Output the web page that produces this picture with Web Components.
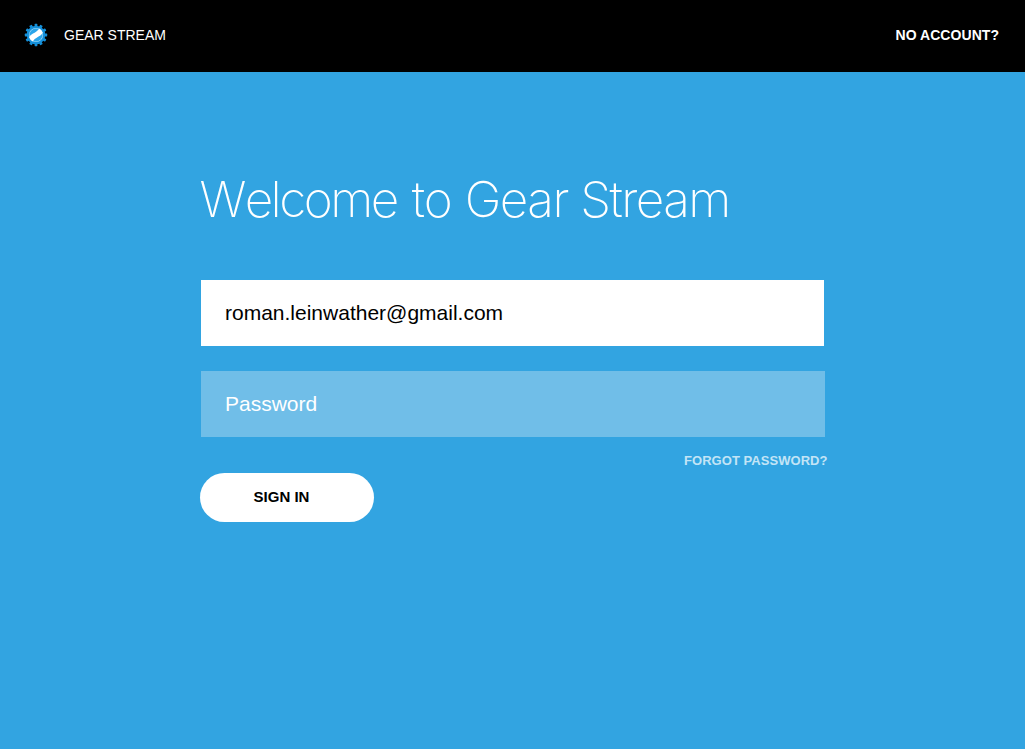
<!DOCTYPE html>
<html lang="en">
<head>
<meta charset="utf-8">
<title>Gear Stream</title>
<style>
body { margin: 0; background: #32a4e1; font-family: "Liberation Sans", Arial, sans-serif; }
</style>
</head>
<body>
<gs-page></gs-page>
<script>
const define = (name, html) => customElements.define(name, class extends HTMLElement {
  constructor() {
    super();
    this.attachShadow({ mode: 'open' }).innerHTML = html;
  }
});

const teeth = Array.from({ length: 12 }, (_, i) =>
  `<rect x="10.6" y="0.8" width="2.8" height="4" rx=".6" transform="rotate(${i * 30} 12 12)"/>`).join('');

define('gs-logo', `
<style>:host { display: block; width: 24px; height: 24px; } svg { display: block; }</style>
<svg width="24" height="24" viewBox="0 0 24 24">
  <g fill="#1590da">${teeth}<circle cx="12" cy="12" r="9.3"/></g>
  <circle cx="12" cy="12" r="7.1" fill="#a9dcf7"/>
  <circle cx="12" cy="12" r="6.5" fill="#2aa5ea"/>
  <path d="M5.2 14.2C6.6 11.6 8.4 11 10.6 9.8C12.8 8.6 14 7.4 15.2 5.6A7.1 7.1 0 0 1 18.8 9.8C17.4 12.4 15.6 13 13.4 14.2C11.2 15.4 10 16.6 8.8 18.4A7.1 7.1 0 0 1 5.2 14.2Z" fill="#fff"/>
</svg>`);

define('gs-header', `
<style>
:host { display: flex; align-items: center; justify-content: space-between; box-sizing: border-box;
  height: 72px; padding: 0 26px 2px 24px; background: #000; color: #fff; font-size: 14px; line-height: 16px; }
.brand { display: flex; align-items: center; gap: 16px; }
</style>
<div class="brand"><gs-logo></gs-logo><span><slot name="brand"></slot></span></div>
<slot name="action"></slot>`);

define('gs-title', `
<style>
:host { display: block; color: #fff; }
h1 { margin: 0; white-space: nowrap;
  font: 200 49.5px/60px Inter, "Liberation Sans", sans-serif; letter-spacing: -1.5px; }
</style>
<h1><slot></slot></h1>`);

define('gs-field', `
<style>
:host { display: flex; align-items: center; box-sizing: border-box; height: 66px; padding: 0 24px;
  width: 623px; background: #fff; color: #000; font-size: 21px; line-height: 24px; }
:host([empty]) { width: 624px; background: #70bee8; color: #fff; }
</style>
<span><slot></slot></span>`);

define('gs-button', `
<style>
:host { display: flex; width: 174.4px; height: 49px; }
button { all: unset; box-sizing: border-box; width: 100%; padding: 0 11.4px 2px 0; border-radius: 25px;
  background: #fff; color: #000; text-align: center; font-weight: 700; font-size: 15px; cursor: pointer; }
</style>
<button><slot></slot></button>`);

define('gs-page', `
<style>
:host { display: block; }
main { display: flex; flex-direction: column; align-items: flex-start; padding: 97px 0 0 201px; }
gs-title { margin: 0 0 51px -1.5px; }
.welcome { display: inline-block; letter-spacing: -2.5px; margin-right: 2.4px; }
.welcome::first-letter { letter-spacing: -1.8px; }
.to { letter-spacing: -1px; margin-right: .6px; }
.stream { letter-spacing: -1.6px; }
gs-field + gs-field { margin-top: 25px; }
.forgot { margin: 16px 0 0 483px; height: 15px; font: 700 13px/15px "Liberation Sans", Arial, sans-serif; letter-spacing: .05px; color: #c3e4f6; }
gs-button { margin: 5px 0 0 -1px; }
.account { font-weight: 700; letter-spacing: .05px; }
</style>
<gs-header><span slot="brand">GEAR STREAM</span><span slot="action" class="account">NO ACCOUNT?</span></gs-header>
<main>
  <gs-title><span class="welcome">Welcome</span> <span class="to">to</span> Gear <span class="stream">Stream</span></gs-title>
  <gs-field>roman.leinwather@gmail.com</gs-field>
  <gs-field empty>Password</gs-field>
  <div class="forgot">FORGOT PASSWORD?</div>
  <gs-button>SIGN IN</gs-button>
</main>`);
</script>
</body>
</html>
